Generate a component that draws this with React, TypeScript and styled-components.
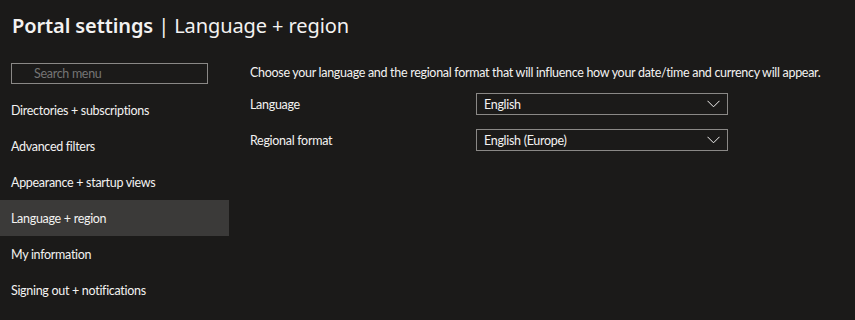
import React from "react";
import styled, { createGlobalStyle } from "styled-components";

const GlobalStyle = createGlobalStyle`
  html, body {
    margin: 0;
    padding: 0;
    background: #1b1a19;
    color: #f3f2f1;
    font-family: Lato, "Noto Sans", sans-serif;
  }
`;

const menuItems = [
  "Directories + subscriptions",
  "Advanced filters",
  "Appearance + startup views",
  "Language + region",
  "My information",
  "Signing out + notifications",
];

const App: React.FC = () => {
  return (
    <Page>
      <GlobalStyle />
      <Title>
        <strong>Portal settings</strong> | Language + region
      </Title>
      <Body>
        <Sidebar>
          <Search placeholder="Search menu" />
          <Menu>
            {menuItems.map(item => (
              <MenuItem key={item} selected={item === "Language + region"}>
                {item}
              </MenuItem>
            ))}
          </Menu>
        </Sidebar>
        <Content>
          <Intro>
            Choose your language and the regional format that will influence how your date/time and currency will appear.
          </Intro>
          <Row>
            <Label>Language</Label>
            <Dropdown>
              <span>English</span>
              <Chevron />
            </Dropdown>
          </Row>
          <Row>
            <Label>Regional format</Label>
            <Dropdown>
              <span>English (Europe)</span>
              <Chevron />
            </Dropdown>
          </Row>
        </Content>
      </Body>
    </Page>
  );
};
export default App;

const Chevron = () => (
  <svg width="13" height="8" viewBox="0 0 13 8" fill="none">
    <path d="M0.5 0.8 L6.5 6.8 L12.5 0.8" stroke="#f3f2f1" strokeWidth="1" />
  </svg>
);

const Page = styled.div`
  width: 855px;
  height: 320px;
  overflow: hidden;
  font-size: 12.5px;
  letter-spacing: -0.3px;
`;

const Title = styled.h1`
  margin: 0;
  padding: 12px 0 0 12px;
  height: 53px;
  box-sizing: border-box;
  font-family: "Noto Sans", sans-serif;
  font-size: 20px;
  font-weight: 400;
  line-height: 28px;
  letter-spacing: -0.1px;

  strong {
    font-weight: 600;
  }
`;

const Body = styled.div`
  display: flex;
`;

const Sidebar = styled.div`
  width: 229px;
  flex-shrink: 0;
  padding-top: 10px;
`;

const Search = styled.input`
  display: block;
  box-sizing: border-box;
  width: 197px;
  height: 21px;
  margin-left: 11px;
  padding: 0 0 0 22px;
  background: transparent;
  border: 1px solid #8a8886;
  border-radius: 0;
  color: #f3f2f1;
  font-family: inherit;
  font-size: 12.5px;
  letter-spacing: -0.3px;
  outline: none;

  ::placeholder {
    color: #a19f9d;
  }
`;

const Menu = styled.ul`
  list-style: none;
  margin: 8px 0 0;
  padding: 0;
`;

const MenuItem = styled.li<{ selected?: boolean }>`
  height: 36px;
  display: flex;
  align-items: center;
  padding-left: 11px;
  background: ${props => (props.selected ? "#3b3a39" : "transparent")};
`;

const Content = styled.div`
  flex: 1;
  padding: 11px 0 0 21px;
`;

const Intro = styled.p`
  margin: 0 0 4px;
  line-height: 18px;
  white-space: nowrap;
`;

const Row = styled.div`
  display: flex;
  align-items: center;
  height: 36px;
`;

const Label = styled.div`
  width: 226px;
`;

const Dropdown = styled.div`
  box-sizing: border-box;
  width: 252px;
  height: 22px;
  border: 1px solid #8a8886;
  display: flex;
  align-items: center;
  justify-content: space-between;
  padding: 0 7px 0 7px;
`;
